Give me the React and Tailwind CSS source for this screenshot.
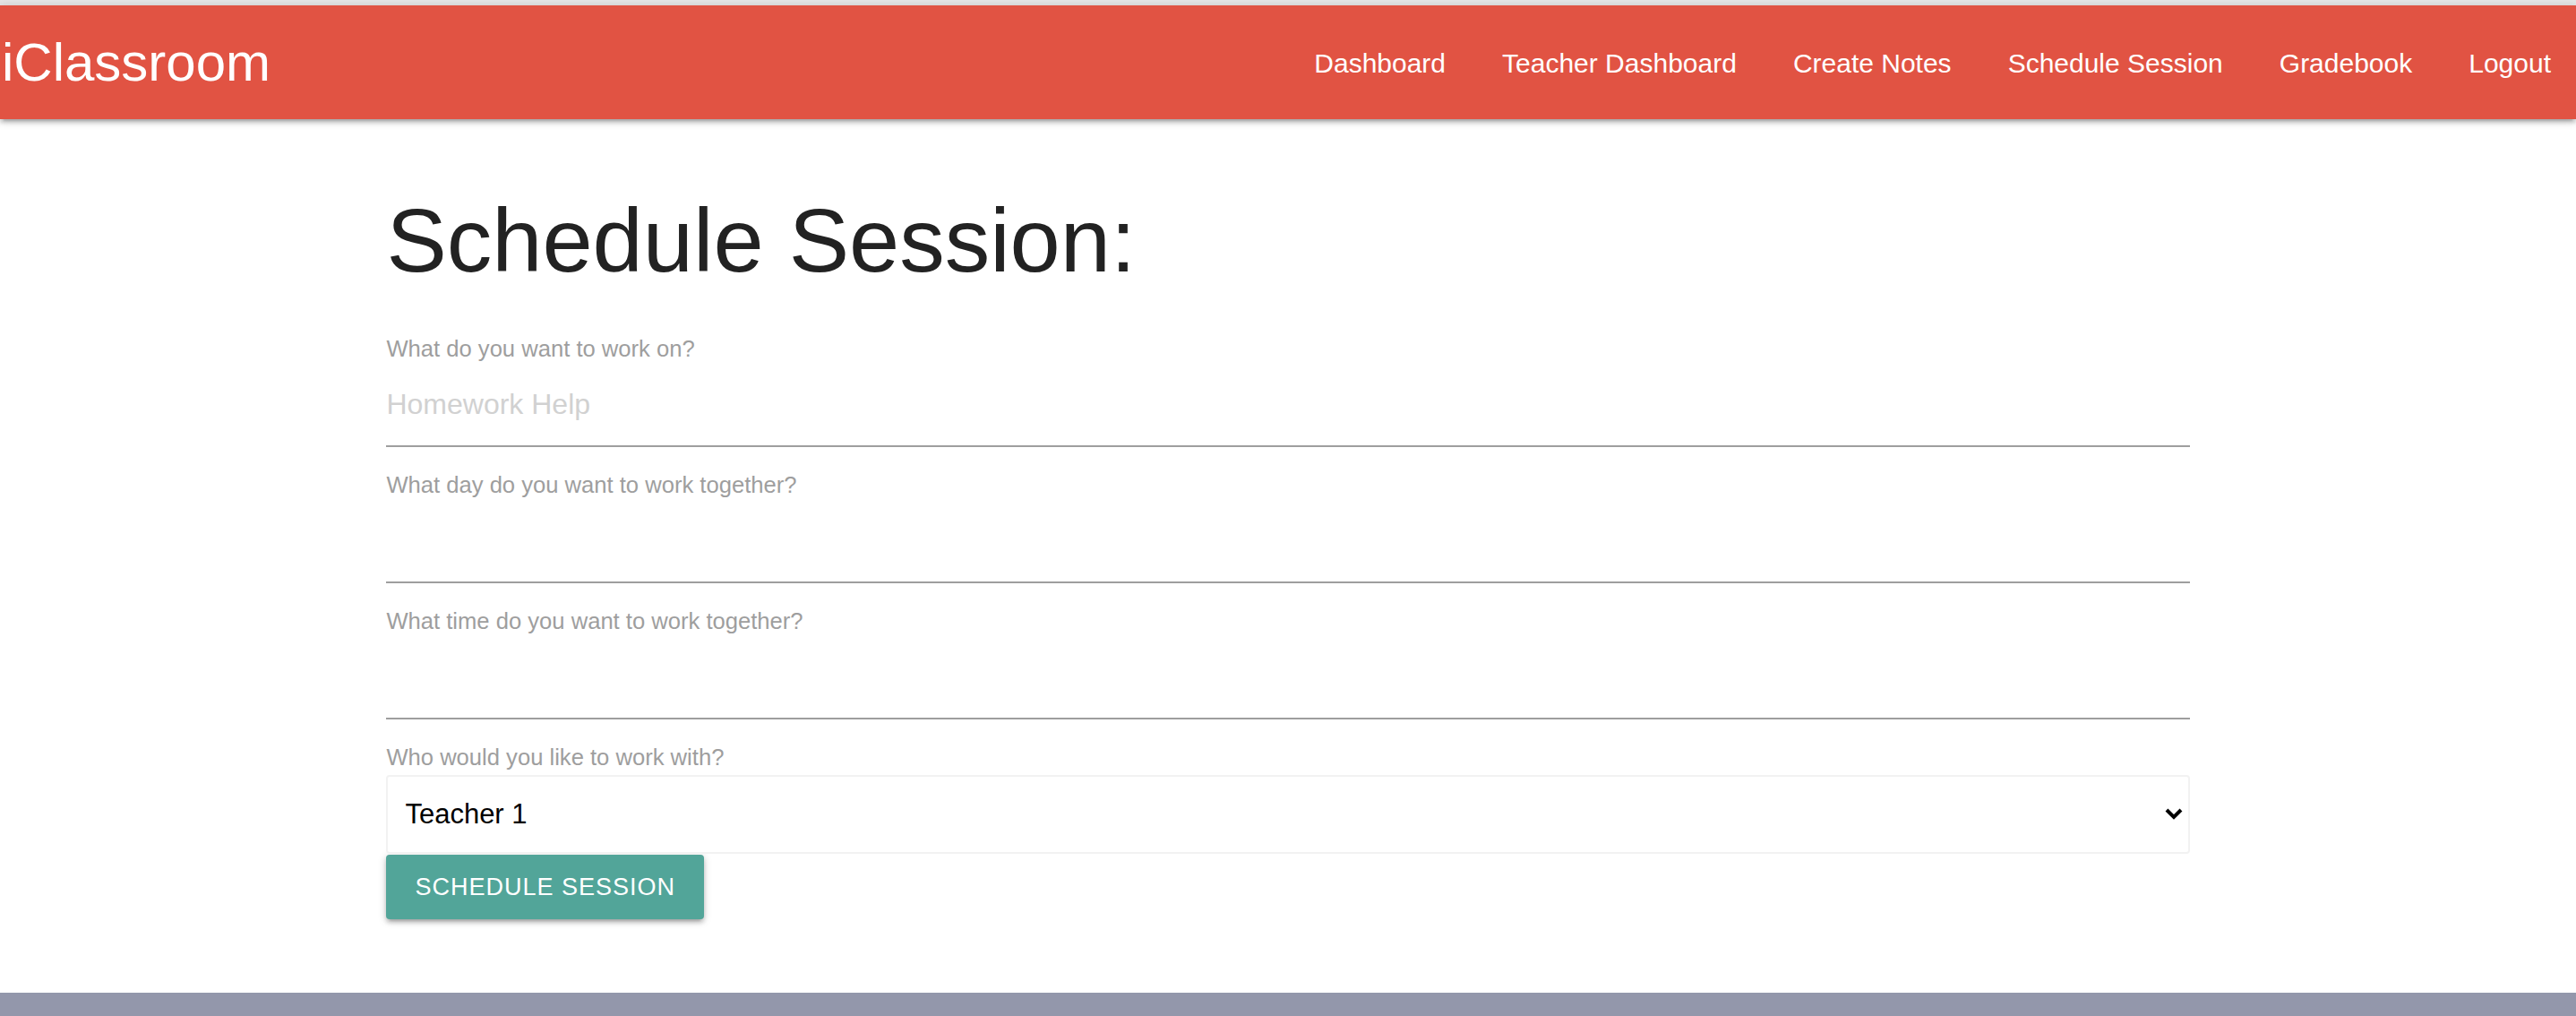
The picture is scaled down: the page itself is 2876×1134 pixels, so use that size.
import React from "react";

const navLinks = ["Dashboard", "Teacher Dashboard", "Create Notes", "Schedule Session", "Gradebook", "Logout"];

function Field({ label, placeholder }) {
  return (
    <div className="flex flex-col">
      <label className="h-[32px] leading-[32px] text-[25.6px] text-[#9e9e9e]">{label}</label>
      <input
        type="text"
        placeholder={placeholder}
        className="h-[94px] w-full border-b-2 border-[#9e9e9e] bg-transparent text-[32px] text-black outline-none placeholder:text-[#d1d1d1]"
      />
    </div>
  );
}

export default function App() {
  return (
    <div className="min-h-[1134px] flex flex-col bg-white" style={{ fontFamily: '"Liberation Sans", Arial, sans-serif' }}>
      <div className="h-[6px] bg-[#e6e6e6]" />
      <nav className="relative z-10 h-[127px] bg-[#e15343] flex items-center justify-between shadow-[0_4px_4px_0_rgba(0,0,0,0.14),0_6px_2px_-4px_rgba(0,0,0,0.12),0_2px_10px_0_rgba(0,0,0,0.2)]">
        <a className="pl-[2px] text-[60px] leading-none text-white">iClassroom</a>
        <ul className="flex items-center gap-[63px] pr-[28px] pt-[3px]">
          {navLinks.map((l) => (
            <li key={l} className="text-[30px] leading-none text-white">
              {l}
            </li>
          ))}
        </ul>
      </nav>
      <main className="mx-auto w-[70%] flex-1">
        <h3 className="mt-[80px] text-[101px] leading-[110px] text-[#222222]">Schedule Session:</h3>
        <form className="mt-[50px] flex flex-col">
          <Field label="What do you want to work on?" placeholder="Homework Help" />
          <div className="mt-[26px]">
            <Field label="What day do you want to work together?" placeholder="" />
          </div>
          <div className="mt-[26px]">
            <Field label="What time do you want to work together?" placeholder="" />
          </div>
          <div className="mt-[26px] flex flex-col">
            <label className="h-[32px] leading-[32px] text-[25.6px] text-[#9e9e9e]">Who would you like to work with?</label>
            <div className="relative mt-[4px]">
              <select className="h-[88px] w-full appearance-none rounded-[4px] border-2 border-[#f2f2f2] bg-white pl-[19px] text-[31px] text-black outline-none">
                <option>Teacher 1</option>
                <option>Teacher 2</option>
              </select>
              <svg
                className="pointer-events-none absolute right-[8px] top-[37px]"
                width="20"
                height="14"
                viewBox="0 0 20 14"
              >
                <path d="M2 2 L10 10 L18 2" fill="none" stroke="black" strokeWidth="4" />
              </svg>
            </div>
            <div className="mt-[1px]">
              <button
                type="button"
                className="h-[72px] rounded-[4px] bg-[#52a599] px-[32px] text-[27px] uppercase tracking-[1px] text-white shadow-[0_4px_4px_0_rgba(0,0,0,0.14),0_6px_2px_-4px_rgba(0,0,0,0.12),0_2px_10px_0_rgba(0,0,0,0.2)]"
              >
                Schedule Session
              </button>
            </div>
          </div>
        </form>
      </main>
      <footer className="h-[26px] bg-[#9397ab]" />
    </div>
  );
}
